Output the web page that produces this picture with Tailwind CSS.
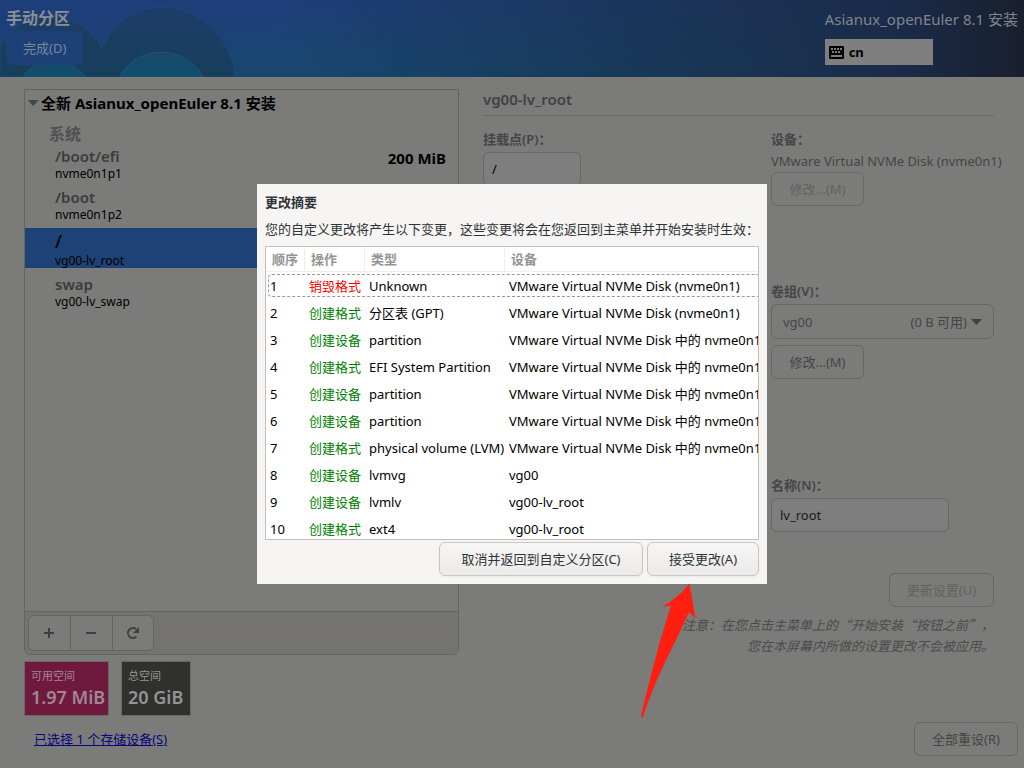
<!DOCTYPE html>
<html lang="zh-CN">
<head>
<meta charset="utf-8">
<title>手动分区</title>
<script src="https://cdn.jsdelivr.net/npm/@tailwindcss/browser@4"></script>
</head>
<body class="font-['Noto_Sans','Noto_Sans_CJK_SC',sans-serif] text-[13px] leading-5 text-[#444646]">
<div class="relative flex min-h-screen flex-col overflow-hidden bg-[#7b7b79]">

  <header class="relative flex h-[77px] justify-between overflow-hidden bg-[linear-gradient(90deg,transparent_28%,#1a2b48_88%,#191f2e_100%),linear-gradient(176deg,#1e3e7a_15%,#1b4374_40%,#124c6a_95%)]">
    <svg class="absolute inset-0 h-[77px] w-[260px]" viewBox="0 0 260 77" fill="none" aria-hidden="true">
      <defs>
        <linearGradient id="ring" x1="0" y1="0" x2="0" y2="77" gradientUnits="userSpaceOnUse"><stop offset="0" stop-color="#1f3c6b"/><stop offset="1" stop-color="#163e5a"/></linearGradient>
        <linearGradient id="core" x1="0" y1="50" x2="0" y2="77" gradientUnits="userSpaceOnUse"><stop offset="0" stop-color="#19496b"/><stop offset="1" stop-color="#104e6d"/></linearGradient>
      </defs>
      <path d="M0 45C12 25 30 17 51 17C73 17 92 29 102 48C112 23 134 7 161 7C201 7 232 38 235 77H0Z" fill="url(#ring)" stroke="#1e4878" stroke-width="1"/>
      <path d="M23 77C36 56 72 56 85 77ZM120 77C136 44 186 44 203 77Z" fill="url(#core)" stroke="#1b5475" stroke-width="1"/>
    </svg>
    <div class="relative flex flex-col items-start pt-[7px] pl-[6px]">
      <h1 class="text-base leading-[22px] font-bold text-[#8c8f93]">手动分区</h1>
      <button class="mt-[2px] h-[34px] rounded-md bg-[#1d4076] px-[17px] text-[#77879f]">完成(D)</button>
    </div>
    <div class="relative flex flex-col items-start gap-2 pt-2 pr-[6px]">
      <div class="text-[15px] leading-[23px] text-[#80858d]">Asianux_openEuler 8.1 安装</div>
      <button class="flex h-[26px] w-[108px] items-center gap-[5px] bg-[#7f7f7f] px-1 font-bold text-black">
        <svg class="h-[13px] w-[15px]" viewBox="0 0 15 13" aria-hidden="true"><rect width="15" height="13" rx="1"/><path d="M2 3h2M5 3h2M8 3h2M11 3h2M3 6h2M6 6h2M9 6h2M2 10h11" stroke="#7f7f7f" stroke-width="2"/></svg>
        cn
      </button>
    </div>
  </header>

  <main class="flex flex-1 pr-[30px] pl-6">
    <div class="flex w-[435px] shrink-0 flex-col pt-3">
      <section class="flex h-[566px] flex-col rounded-b-md border border-[#646462]">
        <div class="flex h-[26px] items-center gap-[2px] pl-[3px] text-[15px] font-bold text-black">
          <svg class="h-[6px] w-[11px]" viewBox="0 0 11 6" aria-hidden="true"><path d="M0 0h11L5 6z" fill="#454747"/></svg>
          <h2>全新 Asianux_openEuler 8.1 安装</h2>
        </div>
        <h3 class="mt-[7px] pl-6 text-base leading-[22px] font-bold text-[#505151]">系统</h3>
        <ul class="mt-px flex-1 text-xs leading-4 text-black">
          <li class="flex h-[41px] justify-between pr-3 pl-[30px] pt-px">
            <div><div class="mb-px text-[15px] leading-[18px] font-semibold text-[#3a3c3c]">/boot/efi</div><div>nvme0n1p1</div></div>
            <div class="pt-[2px] text-[15px] leading-[18px] font-bold">200 MiB</div>
          </li>
          <li class="h-[41px] pl-[30px] pt-px"><div class="mb-px text-[15px] leading-[18px] font-semibold text-[#3a3c3c]">/boot</div><div>nvme0n1p2</div></li>
          <li class="h-10 bg-[#1d4275] pl-[30px] pt-[3px]"><div class="mb-px text-lg leading-[21px] font-medium">/</div><div>vg00-lv_root</div></li>
          <li class="h-[41px] pl-[30px] pt-[7px]"><div class="mb-px text-[15px] leading-[18px] font-semibold text-[#3a3c3c]">swap</div><div>vg00-lv_swap</div></li>
        </ul>
        <div class="flex h-[43px] items-start rounded-b-md border-t border-[#646462] bg-[#757371] pt-[3px] pl-[3px]">
          <div class="flex h-9 divide-x divide-[#646462] overflow-hidden rounded-md border border-[#646462] bg-[#7b7b79]">
            <button class="flex w-[42px] items-center justify-center pr-px" aria-label="添加"><svg class="size-4" viewBox="0 0 16 16" stroke="#3d4040" stroke-width="2" aria-hidden="true"><path d="M8 3v10M3 8h10"/></svg></button>
            <button class="flex w-[42px] items-center justify-center pr-px" aria-label="移除"><svg class="size-4" viewBox="0 0 16 16" stroke="#3d4040" stroke-width="2" aria-hidden="true"><path d="M3 8h10"/></svg></button>
            <button class="flex w-10 items-center justify-center" aria-label="刷新"><svg class="size-4" viewBox="0 0 16 16" fill="none" stroke="#3d4040" stroke-width="2" aria-hidden="true"><path d="M11.500 11.500A5 5 0 1 1 11 4"/><path d="M14 2v6H8z" fill="#3d4040" stroke="none"/></svg></button>
          </div>
        </div>
      </section>
      <div class="mt-[6px] flex gap-3 text-[#949494]">
        <div class="h-[55px] w-[85px] border border-[#686866] bg-[#6f193f] px-[6px] pt-1 text-[#a08890]"><div class="text-[11px] leading-5">可用空间</div><div class="text-lg leading-[22px] font-semibold whitespace-nowrap">1.97 MiB</div></div>
        <div class="h-[55px] w-[70px] border border-[#686866] bg-[#30302d] px-[6px] pt-1"><div class="text-[11px] leading-5">总空间</div><div class="text-lg leading-[22px] font-semibold whitespace-nowrap">20 GiB</div></div>
      </div>
      <a href="#" class="mt-[13px] self-start pl-[10px] text-[#07077c] underline">已选择 1 个存储设备(S)</a>
    </div>

    <section class="ml-6 flex flex-1 flex-col pt-[11px]">
      <h2 class="border-b border-[#6c6c6a] pb-1 text-[15px] leading-[23px] font-semibold text-[#404242]">vg00-lv_root</h2>
      <div class="flex justify-between">
        <div class="flex flex-col items-start pt-3">
          <label for="mount" class="mb-px leading-[23px] font-semibold">挂载点(P)：</label>
          <input id="mount" value="/" class="h-[34px] w-[98px] rounded-md border border-[#686864] bg-[#7e7e7e] px-2 text-black">
        </div>
        <div class="flex w-[223px] flex-col items-start pt-3">
          <div class="leading-[23px] font-semibold">设备：</div>
          <div class="mb-px whitespace-nowrap">VMware Virtual NVMe Disk (nvme0n1)</div>
          <button class="h-[34px] w-[93px] rounded-md border border-[#696967] text-[#626262]" disabled>修改...(M)</button>
          <label for="vg" class="mt-[74px] mb-px leading-[23px] font-semibold">卷组(V)：</label>
          <div class="relative w-full">
            <select id="vg" class="h-[35px] w-full appearance-none rounded-md border border-[#666664] px-[11px]"><option>vg00</option></select>
            <div class="pointer-events-none absolute inset-y-0 right-3 flex items-center gap-1"><span>(0 B 可用)</span><svg class="h-[6px] w-[11px]" viewBox="0 0 11 6" aria-hidden="true"><path d="M0 0h11L5.500 6z" fill="#3f4141"/></svg></div>
          </div>
          <button class="mt-[6px] h-[34px] w-[93px] rounded-md border border-[#666664]">修改...(M)</button>
          <label for="name" class="mt-[94px] mb-px leading-6 font-semibold">名称(N)：</label>
          <input id="name" value="lv_root" class="h-[34px] w-[178px] rounded-md border border-[#686864] bg-[#7e7e7e] px-2 text-[#171a1b]">
          <button class="mt-[41px] h-[34px] w-[105px] self-end rounded-md border border-[#666664] text-[#626262]" disabled>更新设置(U)</button>
        </div>
      </div>
      <p class="mt-[7px] text-right font-['Noto_Sans_CJK_SC',sans-serif] leading-[21px] italic text-[#4b4c4c]">注意：在您点击主菜单上的“开始安装“按钮之前”，<br>您在本屏幕内所做的设置更改不会被应用。</p>
    </section>
  </main>
  <footer class="absolute right-[6px] bottom-3"><button class="h-[34px] w-[104px] rounded-md border border-[#666664]">全部重设(R)</button></footer>

  <div role="dialog" aria-labelledby="summary" class="absolute inset-x-0 top-[184px] mx-auto flex w-[510px] flex-col bg-[#f6f5f4] p-2 text-[#2e3436]">
    <h2 id="summary" class="font-bold">更改摘要</h2>
    <p class="mt-[7px] whitespace-nowrap">您的自定义更改将产生以下变更，这些变更将会在您返回到主菜单并开始安装时生效：</p>
    <div class="mt-[7px] h-[294px] overflow-hidden border border-[#c4bfba] bg-white">
      <table class="w-full table-fixed border-separate border-spacing-0 text-left whitespace-nowrap text-black">
        <colgroup><col class="w-[39px]"><col class="w-[60px]"><col class="w-[140px]"><col></colgroup>
        <thead class="text-[#929595]"><tr class="h-[25px] [&_th]:border-b [&_th]:border-[#f0efee] [&_th]:px-[6px] [&_th]:font-semibold">
          <th class="border-r">顺序</th><th class="border-r">操作</th><th class="border-r">类型</th><th>设备</th></tr></thead>
        <tbody class="[&_td]:px-1 [&_tr]:h-[27px] [&_td:nth-child(2)]:text-[#008000]">
          <tr class="relative"><td>1<span class="absolute top-[2px] -right-2 left-[2px] h-[23px] rounded border border-dashed border-[#989a99]"></span></td><td><span class="text-[#ff0000]">销毁格式</span></td><td>Unknown</td><td>VMware Virtual NVMe Disk (nvme0n1)</td></tr>
          <tr><td>2</td><td>创建格式</td><td>分区表 (GPT)</td><td>VMware Virtual NVMe Disk (nvme0n1)</td></tr>
          <tr><td>3</td><td>创建设备</td><td>partition</td><td>VMware Virtual NVMe Disk 中的 nvme0n1p1</td></tr>
          <tr><td>4</td><td>创建格式</td><td>EFI System Partition</td><td>VMware Virtual NVMe Disk 中的 nvme0n1p1</td></tr>
          <tr><td>5</td><td>创建设备</td><td>partition</td><td>VMware Virtual NVMe Disk 中的 nvme0n1p2</td></tr>
          <tr><td>6</td><td>创建设备</td><td>partition</td><td>VMware Virtual NVMe Disk 中的 nvme0n1p3</td></tr>
          <tr><td>7</td><td>创建格式</td><td>physical volume (LVM)</td><td>VMware Virtual NVMe Disk 中的 nvme0n1p3</td></tr>
          <tr><td>8</td><td>创建设备</td><td>lvmvg</td><td>vg00</td></tr>
          <tr><td>9</td><td>创建设备</td><td>lvmlv</td><td>vg00-lv_root</td></tr>
          <tr><td>10</td><td>创建格式</td><td>ext4</td><td>vg00-lv_root</td></tr>
        </tbody>
      </table>
    </div>
    <div class="mt-[2px] flex justify-end gap-1">
      <button class="h-[34px] w-[204px] rounded-md border border-[#c9c5c0] bg-linear-to-b from-[#f7f6f5] to-[#ebeae9] shadow-xs">取消并返回到自定义分区(C)</button>
      <button class="h-[34px] w-28 rounded-md border border-[#c9c5c0] bg-linear-to-b from-[#f7f6f5] to-[#ebeae9] shadow-xs">接受更改(A)</button>
    </div>
  </div>

  <svg class="pointer-events-none absolute top-[583px] left-[640px] h-[136px] w-[58px]" viewBox="0 0 58 136" aria-hidden="true"><path d="M49.500 .5L55.500 36L49 29Q42 45 29 71Q11 108 3 134Q2 136 1 133Q7 107 19 62Q27 35 31 22.500L22 24Q39 14 49.500 .5Z" fill="#ff1e10"/></svg>
</div>
</body>
</html>
